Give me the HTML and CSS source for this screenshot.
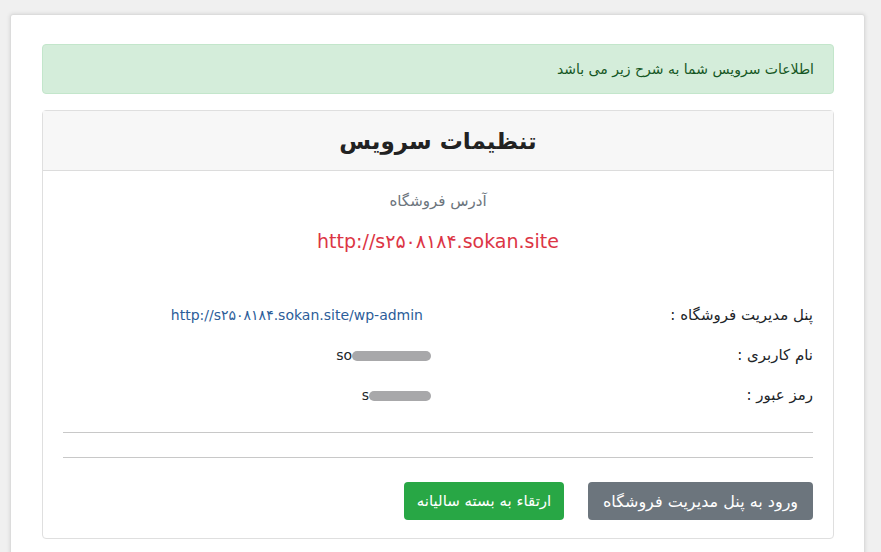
FILE: index.html
```html
<!DOCTYPE html>
<html lang="fa" dir="rtl">
<head>
  <meta charset="UTF-8" />
  <meta name="viewport" content="width=device-width, initial-scale=1.0"/>
  <title>تنظیمات سرویس</title>
  <link rel="stylesheet" href="styles.css">
</head>
<body>
  <div class="page">
    <div class="alert">اطلاعات سرویس شما به شرح زیر می باشد</div>

    <section class="card">
      <header class="card-header">
        <h2>تنظیمات سرویس</h2>
      </header>

      <div class="card-body">
        <p class="store-label">آدرس فروشگاه</p>
        <p class="store-url"><a href="#" dir="ltr">http://s۲۵۰۸۱۸۴.sokan.site</a></p>

        <div class="info">
          <div class="info-label">پنل مدیریت فروشگاه :</div>
          <div class="info-value"><a class="admin-link" href="#" dir="ltr">http://s۲۵۰۸۱۸۴.sokan.site/wp-admin</a></div>

          <div class="info-label">نام کاربری :</div>
          <div class="info-value"><span dir="ltr">so<span class="blur blur-user"></span></span></div>

          <div class="info-label">رمز عبور :</div>
          <div class="info-value"><span dir="ltr">s<span class="blur blur-pass"></span></span></div>
        </div>

        <hr>
        <hr class="second">

        <div class="actions">
          <button class="btn btn-gray">ورود به پنل مدیریت فروشگاه</button>
          <button class="btn btn-green">ارتقاء به بسته سالیانه</button>
        </div>
      </div>
    </section>
  </div>
</body>
</html>
```

FILE: styles.css
```css
html, body {
  margin: 0;
  background: #f0f0f0;
  font-family: "DejaVu Sans", "Noto Sans", sans-serif;
  color: #212529;
}
.page {
  margin: 14px 16px 0 10px;
  padding: 29px 30px 30px 31px;
  background: #fff;
  border: 1px solid #dcdcdc;
  border-radius: 3px;
  box-shadow: 0 0 4px rgba(0, 0, 0, 0.12);
  min-height: 560px;
}
.alert {
  background: #d4edda;
  border: 1px solid #c3e6cb;
  color: #155724;
  border-radius: 4px;
  padding: 12px 19px;
  font-size: 14px;
  line-height: 24px;
  margin-bottom: 16px;
}
.card {
  border: 1px solid #dfdfdf;
  border-radius: 4px;
}
.card-header {
  background: #f7f7f7;
  border-bottom: 1px solid #dcdcdc;
  height: 59px;
  display: flex;
  align-items: center;
  justify-content: center;
}
.card-header h2 {
  margin: 0;
  font-size: 23px;
  font-weight: bold;
  color: #222;
}
.card-body {
  padding: 20px 20px 18px;
}
.store-label {
  margin: 0;
  text-align: center;
  font-size: 15px;
  line-height: 20px;
  color: #6c757d;
}
.store-url {
  margin: 19px 0 0;
  text-align: center;
  font-size: 19px;
  line-height: 22px;
}
.store-url a {
  color: #dc3545;
  text-decoration: none;
}
.info {
  margin-top: 43px;
  display: grid;
  grid-template-columns: 374px 1fr;
  column-gap: 8px;
  grid-auto-rows: 40px;
  align-items: center;
  font-size: 15px;
}
.info-value {
  text-align: right;
  font-size: 14px;
}
.admin-link {
  color: #2c5d99;
  text-decoration: none;
  margin-right: 8px;
}
.blur {
  display: inline-block;
  height: 10px;
  background: #a8a8aa;
  border-radius: 5px;
  vertical-align: middle;
}
.blur-user { width: 79px; }
.blur-pass { width: 62px; }
hr {
  border: none;
  border-top: 1px solid #c8c8c8;
  margin: 17px 0 0;
}
hr.second {
  margin-top: 24px;
}
.actions {
  margin-top: 24px;
  display: flex;
  gap: 24px;
}
.btn {
  height: 38px;
  border: none;
  border-radius: 4px;
  color: #fff;
  font-family: inherit;
  font-size: 16px;
  padding: 0 10px;
  cursor: pointer;
}
.btn-gray {
  background: #6c757d;
  width: 225px;
}
.btn-green {
  background: #28a745;
  width: 160px;
  font-size: 15px;
}
```
